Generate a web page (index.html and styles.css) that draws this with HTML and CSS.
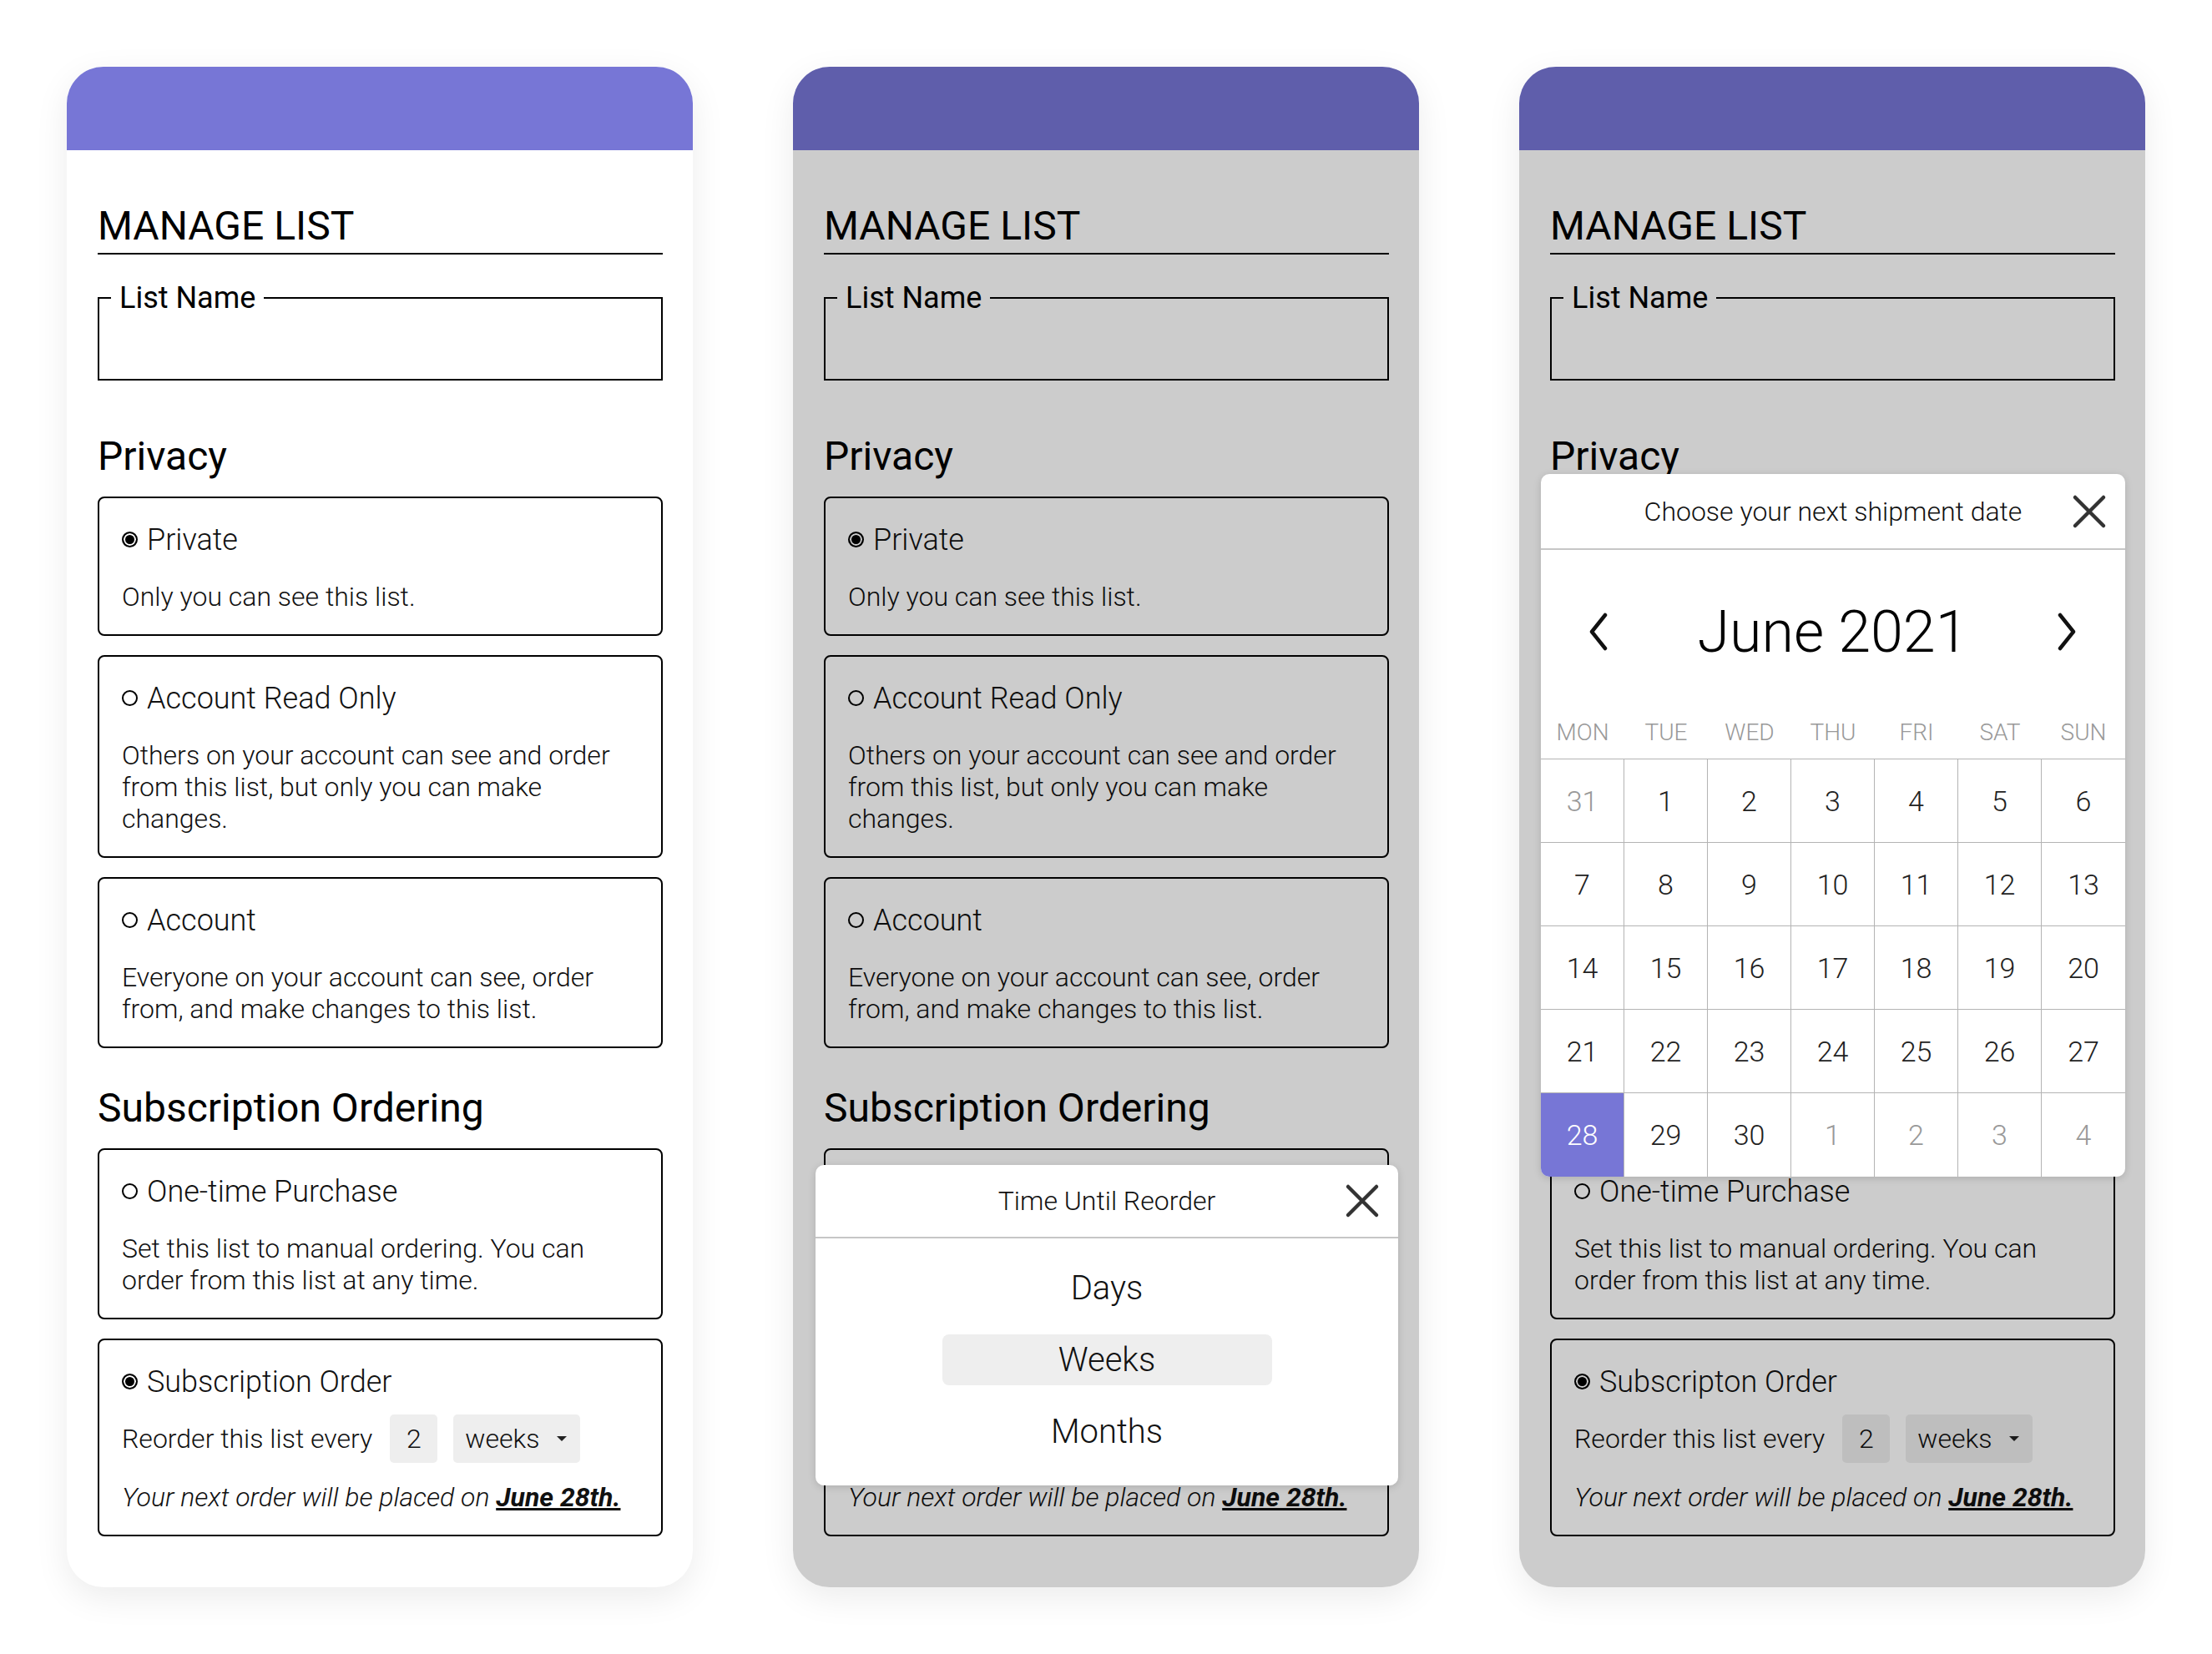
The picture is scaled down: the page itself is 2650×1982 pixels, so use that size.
FILE: index.html
```html
<!DOCTYPE html>
<html lang="en">
<head>
<meta charset="UTF-8">
<meta name="viewport" content="width=device-width, initial-scale=1.0">
<title>Manage List</title>
<link rel="stylesheet" href="styles.css">
</head>
<body>
<div class="screens">

  <!-- screen 1: the form -->
  <section class="phone">
    <div class="phone-top"></div>
    <div class="phone-body">
      <h1 class="title">MANAGE LIST</h1>
      <fieldset class="name-field">
        <legend>List Name</legend>
        <div class="name-space"></div>
      </fieldset>

      <h2 class="section">Privacy</h2>
      <div class="option">
        <div class="option-title"><span class="radio checked"></span>Private</div>
        <p class="option-text">Only you can see this list.</p>
      </div>
      <div class="option">
        <div class="option-title"><span class="radio"></span>Account Read Only</div>
        <p class="option-text">Others on your account can see and order from this list, but only you can make changes.</p>
      </div>
      <div class="option">
        <div class="option-title"><span class="radio"></span>Account</div>
        <p class="option-text">Everyone on your account can see, order from, and make changes to this list.</p>
      </div>

      <h2 class="section sub">Subscription Ordering</h2>
      <div class="option">
        <div class="option-title"><span class="radio"></span>One-time Purchase</div>
        <p class="option-text">Set this list to manual ordering. You can order from this list at any time.</p>
      </div>
      <div class="option">
        <div class="option-title"><span class="radio checked"></span>Subscription Order</div>
        <div class="reorder">
          <span>Reorder this list every</span>
          <span class="num-box">2</span>
          <span class="select-box">weeks<span class="caret"></span></span>
        </div>
        <p class="next-order">Your next order will be placed on <b>June 28th.</b></p>
      </div>
    </div>
  </section>

  <!-- screen 2: time until reorder picker -->
  <section class="phone">
    <div class="phone-top"></div>
    <div class="phone-body">
      <h1 class="title">MANAGE LIST</h1>
      <fieldset class="name-field">
        <legend>List Name</legend>
        <div class="name-space"></div>
      </fieldset>

      <h2 class="section">Privacy</h2>
      <div class="option">
        <div class="option-title"><span class="radio checked"></span>Private</div>
        <p class="option-text">Only you can see this list.</p>
      </div>
      <div class="option">
        <div class="option-title"><span class="radio"></span>Account Read Only</div>
        <p class="option-text">Others on your account can see and order from this list, but only you can make changes.</p>
      </div>
      <div class="option">
        <div class="option-title"><span class="radio"></span>Account</div>
        <p class="option-text">Everyone on your account can see, order from, and make changes to this list.</p>
      </div>

      <h2 class="section sub">Subscription Ordering</h2>
      <div class="option">
        <div class="option-title"><span class="radio"></span>One-time Purchase</div>
        <p class="option-text">Set this list to manual ordering. You can order from this list at any time.</p>
      </div>
      <div class="option">
        <div class="option-title"><span class="radio checked"></span>Subscription Order</div>
        <div class="reorder">
          <span>Reorder this list every</span>
          <span class="num-box">2</span>
          <span class="select-box">weeks<span class="caret"></span></span>
        </div>
        <p class="next-order">Your next order will be placed on <b>June 28th.</b></p>
      </div>
    </div>
    <div class="dim"></div>
    <div class="sheet sheet-units">
      <div class="sheet-head">
        <span>Time Until Reorder</span>
        <svg class="close" width="42" height="42" viewBox="0 0 42 42"><path d="M4 4 L38 38 M38 4 L4 38"/></svg>
      </div>
      <ul class="units">
        <li>Days</li>
        <li class="picked">Weeks</li>
        <li>Months</li>
      </ul>
    </div>
  </section>

  <!-- screen 3: shipment date calendar -->
  <section class="phone">
    <div class="phone-top"></div>
    <div class="phone-body">
      <h1 class="title">MANAGE LIST</h1>
      <fieldset class="name-field">
        <legend>List Name</legend>
        <div class="name-space"></div>
      </fieldset>

      <h2 class="section">Privacy</h2>
      <div class="option">
        <div class="option-title"><span class="radio checked"></span>Private</div>
        <p class="option-text">Only you can see this list.</p>
      </div>
      <div class="option">
        <div class="option-title"><span class="radio"></span>Account Read Only</div>
        <p class="option-text">Others on your account can see and order from this list, but only you can make changes.</p>
      </div>
      <div class="option">
        <div class="option-title"><span class="radio"></span>Account</div>
        <p class="option-text">Everyone on your account can see, order from, and make changes to this list.</p>
      </div>

      <h2 class="section sub">Subscription Ordering</h2>
      <div class="option">
        <div class="option-title"><span class="radio"></span>One-time Purchase</div>
        <p class="option-text">Set this list to manual ordering. You can order from this list at any time.</p>
      </div>
      <div class="option">
        <div class="option-title"><span class="radio checked"></span>Subscripton Order</div>
        <div class="reorder">
          <span>Reorder this list every</span>
          <span class="num-box">2</span>
          <span class="select-box">weeks<span class="caret"></span></span>
        </div>
        <p class="next-order">Your next order will be placed on <b>June 28th.</b></p>
      </div>
    </div>
    <div class="dim"></div>
    <div class="sheet sheet-date">
      <div class="sheet-head date-head">
        <span>Choose your next shipment date</span>
        <svg class="close" width="42" height="42" viewBox="0 0 42 42"><path d="M4 4 L38 38 M38 4 L4 38"/></svg>
      </div>
      <div class="month-nav">
        <svg class="chev" width="24" height="46" viewBox="0 0 24 46"><path d="M20 3 L4 23 L20 43"/></svg>
        <span class="month">June 2021</span>
        <svg class="chev" width="24" height="46" viewBox="0 0 24 46"><path d="M4 3 L20 23 L4 43"/></svg>
      </div>
      <div class="weekdays">
        <span>MON</span><span>TUE</span><span>WED</span><span>THU</span><span>FRI</span><span>SAT</span><span>SUN</span>
      </div>
      <div class="days">
        <span class="other">31</span><span>1</span><span>2</span><span>3</span><span>4</span><span>5</span><span>6</span>
        <span>7</span><span>8</span><span>9</span><span>10</span><span>11</span><span>12</span><span>13</span>
        <span>14</span><span>15</span><span>16</span><span>17</span><span>18</span><span>19</span><span>20</span>
        <span>21</span><span>22</span><span>23</span><span>24</span><span>25</span><span>26</span><span>27</span>
        <span class="today">28</span><span>29</span><span>30</span><span class="other">1</span><span class="other">2</span><span class="other">3</span><span class="other">4</span>
      </div>
    </div>
  </section>

</div>
</body>
</html>
```

FILE: styles.css
```css
body {
  margin: 0;
  background: #fff;
  font-family: Roboto, "Noto Sans", sans-serif;
  font-weight: 300;
  color: #111;
}

.screens {
  display: flex;
  gap: 120px;
  padding: 80px;
}

/* one phone screen */
.phone {
  position: relative;
  width: 750px;
  height: 1822px;
  flex: none;
  background: #fff;
  border-radius: 44px;
  overflow: hidden;
  box-shadow: 0 12px 40px rgba(0, 0, 0, 0.08);
}
.phone-top {
  height: 100px;
  background: #7776d6;
}
.phone-body {
  padding: 63px 36px 0 37px;
}

.title {
  margin: 0;
  padding-bottom: 4px;
  border-bottom: 2px solid #000;
  font-size: 48px;
  line-height: 56px;
  font-weight: 400;
  color: #000;
}

.name-field {
  margin: 32px 0 0;
  padding: 0;
  border: 2px solid #000;
  min-inline-size: auto;
}
.name-field legend {
  margin-left: 14px;
  padding: 0 10px;
  font-size: 36px;
  line-height: 40px;
  font-weight: 400;
  color: #000;
}
.name-space {
  height: 77px;
}

.section {
  margin: 63px 0 20px;
  font-size: 48px;
  line-height: 56px;
  font-weight: 400;
  color: #000;
}
.section.sub {
  margin-top: 44px;
}

.option {
  border: 2px solid #000;
  border-radius: 8px;
  padding: 29px 28px 26px 27px;
  margin-bottom: 23px;
}
.option-title {
  display: flex;
  align-items: center;
  gap: 11px;
  font-size: 36px;
  line-height: 42px;
}
.radio {
  width: 19px;
  height: 19px;
  box-sizing: border-box;
  border: 2px solid #000;
  border-radius: 50%;
  margin-bottom: 2px;
  flex: none;
}
.radio.checked {
  background: #000;
  box-shadow: inset 0 0 0 2px #fff;
}
.option-text {
  margin: 28px 0 0;
  font-size: 32px;
  line-height: 38px;
}

.reorder {
  display: flex;
  align-items: center;
  height: 58px;
  margin-top: 18px;
  font-size: 32px;
}
.num-box {
  width: 57px;
  height: 58px;
  margin-left: 21px;
  background: #eee;
  border-radius: 5px;
  display: flex;
  align-items: center;
  justify-content: center;
}
.select-box {
  width: 152px;
  height: 58px;
  margin-left: 19px;
  padding: 0 16px 0 14px;
  box-sizing: border-box;
  background: #eee;
  border-radius: 5px;
  display: flex;
  align-items: center;
  justify-content: space-between;
}
.caret {
  width: 0;
  height: 0;
  border-left: 6px solid transparent;
  border-right: 6px solid transparent;
  border-top: 6px solid #222;
}
.next-order {
  margin: 22px 0 0;
  font-size: 32px;
  line-height: 38px;
  font-style: italic;
}
.next-order b {
  font-weight: 700;
  text-decoration: underline;
}

/* modal layer */
.dim {
  position: absolute;
  inset: 0;
  background: rgba(0, 0, 0, 0.2);
}
.sheet {
  position: absolute;
  background: #fff;
  border-radius: 10px;
  overflow: hidden;
  box-shadow: 0 2px 10px rgba(0, 0, 0, 0.15);
}
.sheet-units {
  left: 27px;
  bottom: 122px;
  width: 698px;
}
.sheet-date {
  left: 26px;
  top: 488px;
  width: 700px;
}
.sheet-head {
  position: relative;
  height: 86px;
  border-bottom: 2px solid #c6c6c6;
  display: flex;
  align-items: center;
  justify-content: center;
  font-size: 32px;
  color: #111;
}
.date-head {
  height: 89px;
}
.close {
  position: absolute;
  right: 22px;
  top: 50%;
  margin-top: -21px;
}
.close path {
  stroke: #333;
  stroke-width: 4.5;
  stroke-linecap: round;
  fill: none;
}

.units {
  list-style: none;
  margin: 0;
  padding: 29px 0 34px;
  display: flex;
  flex-direction: column;
  align-items: center;
  gap: 25px;
}
.units li {
  width: 395px;
  height: 61px;
  border-radius: 8px;
  display: flex;
  align-items: center;
  justify-content: center;
  font-size: 40px;
  color: #111;
}
.units li.picked {
  background: #eee;
}

.month-nav {
  height: 196px;
  padding: 0 58px 0 57px;
  display: flex;
  align-items: center;
  justify-content: space-between;
}
.month {
  font-size: 70px;
  color: #000;
}
.chev path {
  stroke: #111;
  stroke-width: 4.5;
  stroke-linecap: round;
  stroke-linejoin: round;
  fill: none;
}
.weekdays {
  display: grid;
  grid-template-columns: repeat(7, 100px);
  height: 54px;
  line-height: 46px;
  font-size: 28px;
  color: #999;
  text-align: center;
}
.days {
  display: grid;
  grid-template-columns: repeat(7, 100px);
  grid-auto-rows: 100px;
  border-top: 1px solid #b4b4b4;
}
.days span {
  display: flex;
  align-items: center;
  justify-content: center;
  font-size: 34px;
  color: #222;
  border-right: 1px solid #b4b4b4;
  border-bottom: 1px solid #b4b4b4;
}
.days span:nth-child(7n) {
  border-right: none;
}
.days span:nth-last-child(-n+7) {
  border-bottom: none;
}
.days .other {
  color: #999;
}
.days .today {
  background: #7776d6;
  color: #fff;
}
```
